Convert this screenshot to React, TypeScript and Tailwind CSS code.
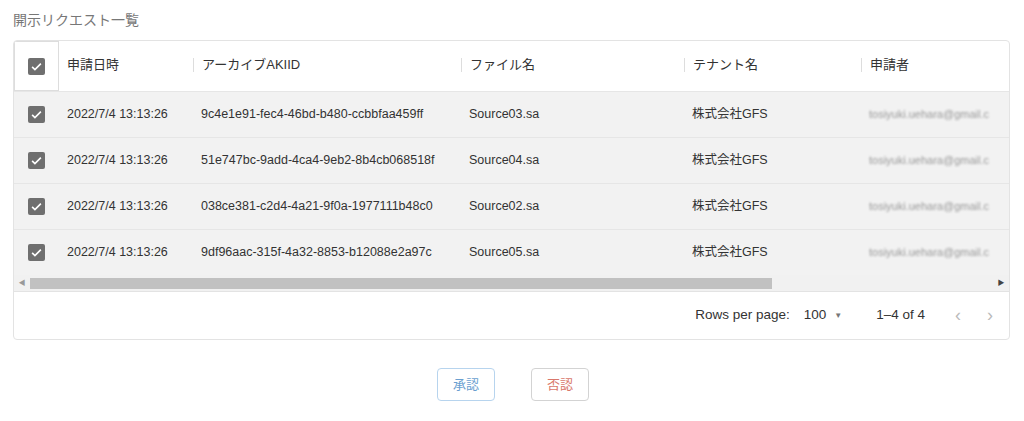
const rows = [
  ["9c4e1e91-fec4-46bd-b480-ccbbfaa459ff", "Source03.sa"],
  ["51e747bc-9add-4ca4-9eb2-8b4cb068518f", "Source04.sa"],
  ["038ce381-c2d4-4a21-9f0a-1977111b48c0", "Source02.sa"],
  ["9df96aac-315f-4a32-8853-b12088e2a97c", "Source05.sa"],
];

function Check() {
  return (
    <span className="flex h-[17px] w-[17px] items-center justify-center rounded-[2px] bg-[#6f6f6f]">
      <svg viewBox="0 0 24 24" className="h-[15px] w-[15px]">
        <path d="M5 12.5l4.5 4.5L19 7.5" fill="none" stroke="white" strokeWidth="2.6" />
      </svg>
    </span>
  );
}

export default function App() {
  return (
    <div className="h-[421px] w-[1024px] bg-white text-[13px] text-[#333]" style={{ fontFamily: '"Liberation Sans","Noto Sans CJK JP",sans-serif' }}>
      <div className="px-[13px] pt-[10px]">
        <div className="h-[30px] text-[14px] text-[#777]">開示リクエスト一覧</div>
        <div className="w-[997px] overflow-hidden rounded-[4px] border border-[#e3e3e3]">
          <div className="flex h-[50px] items-center pb-[2px]">
            <div className="mb-[-2px] flex h-[50px] w-[45px] items-center justify-center border border-[#ddd]"><Check /></div>
            <div className="flex w-[134px] items-center pl-[8px]">申請日時</div>
            <div className="flex w-[268px] items-center"><span className="mr-[8px] h-[14px] w-px bg-[#ddd]" />アーカイブAKIID</div>
            <div className="flex w-[223px] items-center"><span className="mr-[8px] h-[14px] w-px bg-[#ddd]" />ファイル名</div>
            <div className="flex w-[177px] items-center"><span className="mr-[8px] h-[14px] w-px bg-[#ddd]" />テナント名</div>
            <div className="flex flex-1 items-center"><span className="mr-[8px] h-[14px] w-px bg-[#ddd]" />申請者</div>
          </div>
          {rows.map(([id, file]) => (
            <div key={id} className="flex h-[46px] items-center whitespace-nowrap border-t border-[#e6e6e6] bg-[#f2f2f2] text-[12.5px]">
              <div className="flex w-[45px] justify-center"><Check /></div>
              <div className="w-[134px] pl-[8px]">2022/7/4 13:13:26</div>
              <div className="w-[268px] pl-[8px]">{id}</div>
              <div className="w-[223px] pl-[8px]">{file}</div>
              <div className="w-[177px] pl-[8px]">株式会社GFS</div>
              <div className="flex-1 overflow-hidden pl-[8px] text-[11px] text-[#999] blur-[1px]">tosiyuki.uehara@gmail.c</div>
            </div>
          ))}
          <div className="flex h-[16px] items-center bg-[#f1f1f1]">
            <span className="w-[16px] text-center text-[7px] text-[#999]">◀</span>
            <div className="h-[11px] w-[742px] bg-[#c1c1c1]" />
            <div className="flex-1" />
            <span className="w-[16px] text-center text-[7px] text-[#444]">▶</span>
          </div>
          <div className="flex h-[48px] items-center justify-end border-t border-[#e3e3e3] text-[13.5px]">
            <span>Rows per page:</span>
            <span className="ml-[14px] flex items-center">100<span className="ml-[8px] text-[8px] text-[#777]">▼</span></span>
            <span className="ml-[34px]">1–4 of 4</span>
            <span className="ml-[30px] text-[18px] text-[#bbb]">‹</span>
            <span className="ml-[26px] mr-[16px] text-[18px] text-[#bbb]">›</span>
          </div>
        </div>
        <div className="mt-[28px] flex justify-center gap-[36px] pl-[2px]">
          <button className="h-[33px] w-[58px] rounded-[4px] border border-[#b7d4ee] text-[13px] text-[#6a9fd0]">承認</button>
          <button className="h-[33px] w-[58px] rounded-[4px] border border-[#d3d3d3] text-[13px] text-[#d9776b]">否認</button>
        </div>
      </div>
    </div>
  );
}
